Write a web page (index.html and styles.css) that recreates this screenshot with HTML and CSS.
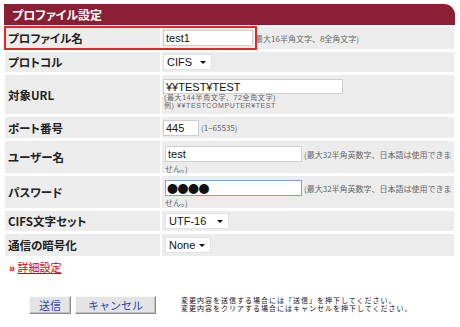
FILE: index.html
```html
<!DOCTYPE html>
<html lang="ja">
<head>
    <meta charset="UTF-8">
    <title>プロファイル設定</title>
    <link rel="stylesheet" href="styles.css">
</head>
<body>

    <div class="panel">
        <div class="title">プロファイル設定</div>

        <table class="form">
            <tr class="r1">
                <th>プロファイル名</th>
                <td>
                    <div class="line">
                        <input class="txt w90" type="text" value="test1">
                        <span class="hint">最大16半角文字、8全角文字)</span>
                    </div>
                </td>
            </tr>
            <tr class="r2">
                <th>プロトコル</th>
                <td>
                    <div class="line">
                        <span class="sel w49"><select><option>CIFS</option></select></span>
                    </div>
                </td>
            </tr>
            <tr class="r3">
                <th>対象URL</th>
                <td>
                    <div class="line">
                        <input class="txt w180 thin" type="text" value="¥¥TEST¥TEST">
                    </div>
                    <div class="small">(最大144半角文字、72全角文字)</div>
                    <div class="small">例) ¥¥TESTCOMPUTER¥TEST</div>
                </td>
            </tr>
            <tr class="r4">
                <th>ポート番号</th>
                <td>
                    <div class="line">
                        <input class="txt w35" type="text" value="445">
                        <span class="hint">(1−65535)</span>
                    </div>
                </td>
            </tr>
            <tr class="r5">
                <th>ユーザー名</th>
                <td>
                    <div class="line">
                        <input class="txt w137" type="text" value="test">
                        <span class="hint">(最大32半角英数字、日本語は使用できま</span>
                    </div>
                    <div class="rest">せん。)</div>
                </td>
            </tr>
            <tr class="r6">
                <th>パスワード</th>
                <td>
                    <div class="line">
                        <input class="txt w137 pw focus" type="text" value="●●●●">
                        <span class="hint">(最大32半角英数字、日本語は使用できま</span>
                    </div>
                    <div class="rest">せん。)</div>
                </td>
            </tr>
            <tr class="r7">
                <th>CIFS文字セット</th>
                <td>
                    <div class="line">
                        <span class="sel w64"><select><option>UTF-16</option></select></span>
                    </div>
                </td>
            </tr>
            <tr class="r8">
                <th>通信の暗号化</th>
                <td>
                    <div class="line">
                        <span class="sel w46"><select><option>None</option></select></span>
                    </div>
                </td>
            </tr>
        </table>

        <div class="mark"></div>

        <div class="more">
            <span class="raquo">»</span> <a href="#">詳細設定</a>
        </div>

        <div class="actions">
            <button class="btn b-send">送信</button>
            <button class="btn b-cancel">キャンセル</button>
            <div class="note">
                <div>変更内容を送信する場合には「送信」を押下してください。</div>
                <div>変更内容をクリアする場合にはキャンセルを押下してください。</div>
            </div>
        </div>
    </div>

</body>
</html>
```

FILE: styles.css
```css
body {
    margin: 0;
    padding: 0;
    background: #ffffff;
    font-family: "Noto Sans CJK JP", "Liberation Sans", sans-serif;
    color: #222;
}

.panel {
    position: relative;
    margin: 4px 0 0 3px;
    width: 453px;
}

.title {
    margin-left: 1px;
    width: 451px;
    height: 21px;
    box-sizing: border-box;
    padding: 3px 0 0 8px;
    background: #8a1f33;
    border-top-right-radius: 11px;
    color: #fff;
    font-size: 12px;
    font-weight: bold;
    line-height: 15px;
    font-feature-settings: "palt";
}

.form {
    width: 453px;
    margin-top: -1px;
    border-collapse: separate;
    border-spacing: 2px 3px;
    table-layout: fixed;
}

.form th,
.form td {
    background: #ececec;
    padding: 0;
    vertical-align: middle;
    box-sizing: border-box;
}

.form th {
    width: 155px;
    padding-left: 3px;
    text-align: left;
    font-size: 11.5px;
    font-weight: bold;
    line-height: 14px;
    color: #222;
    font-feature-settings: "palt";
}

.form td {
    padding-left: 1px;
    font-size: 0;
}

/* row heights follow the reference */
.r1 th, .r1 td { height: 22px; }
.r2 th, .r2 td { height: 20px; }
.r3 th, .r3 td { height: 39px; }
.r4 th, .r4 td { height: 21px; }
.r5 th, .r5 td { height: 31px; }
.r6 th, .r6 td { height: 32px; }
.r7 th, .r7 td { height: 20px; }
.r8 th, .r8 td { height: 22px; }

.r3 td, .r5 td, .r6 td {
    vertical-align: top;
}

.r3 td { padding-top: 4px; }
.r5 td { padding: 5px 0 0 3px; }
.r6 td { padding: 4px 0 0 3px; }
.r7 td, .r8 td { padding-left: 3px; }

.line {
    display: flex;
    align-items: center;
    height: 16px;
    white-space: nowrap;
}

.txt {
    height: 16px;
    box-sizing: border-box;
    margin: 0;
    padding: 0 0 0 2px;
    border: 1px solid #cfcfcf;
    background: #fff;
    font-family: "Liberation Sans", sans-serif;
    font-size: 11px;
    color: #111;
    outline: none;
}

.thin { height: 15px; }

.w35 { width: 36px; }
.w90 { width: 90px; }
.w137 { width: 137px; }
.w180 { width: 180px; }

.pw {
    font-family: "Noto Sans CJK JP", sans-serif;
    font-size: 11px;
    letter-spacing: -0.5px;
    padding-left: 1px;
}

.focus {
    border-color: #7fa4d0;
}

.hint {
    margin-left: 2px;
    font-size: 8px;
    line-height: 9px;
    color: #666;
}

.r3 .line { height: 15px; }

.small {
    margin-left: 1px;
    font-family: "Liberation Sans", "Noto Sans CJK JP", sans-serif;
    font-size: 7px;
    letter-spacing: 0.6px;
    line-height: 8px;
    color: #666;
    white-space: nowrap;
}

.rest {
    margin-top: 2px;
    font-size: 8px;
    line-height: 9px;
    color: #666;
}

.sel {
    position: relative;
    display: inline-block;
    height: 16px;
}

.sel select {
    appearance: none;
    -webkit-appearance: none;
    height: 16px;
    width: 100%;
    margin: 0;
    padding: 0 0 0 3px;
    border: 1px solid #e2e2e2;
    border-radius: 0;
    background: #fff;
    font-family: "Liberation Sans", sans-serif;
    font-size: 11px;
    line-height: 14px;
    color: #111;
}

.sel::after {
    content: "";
    position: absolute;
    right: 6px;
    top: 7px;
    border-left: 3px solid transparent;
    border-right: 3px solid transparent;
    border-top: 3px solid #111;
}

.w46 { width: 46px; }
.w49 { width: 49px; }
.w64 { width: 64px; }

.mark {
    position: absolute;
    left: 1px;
    top: 22px;
    width: 253px;
    height: 24px;
    box-sizing: border-box;
    border: 2px solid #e3282c;
}

.more {
    margin: 2px 0 0 6px;
    height: 12px;
    font-size: 11px;
    line-height: 12px;
    color: #e00000;
}

.raquo {
    font-family: "Liberation Sans", sans-serif;
    font-weight: bold;
}

.more a {
    color: #e00000;
    text-decoration: underline;
}

.actions {
    display: flex;
    align-items: center;
    margin: 23px 0 0 26px;
}

.btn {
    height: 18px;
    margin: 0 4px 0 0;
    padding: 0;
    background: #e4e4e4;
    border: 1px solid;
    border-color: #f8f8f8 #8a8a8a #8a8a8a #f8f8f8;
    box-shadow: inset -1px -1px 0 #c0c0c0;
    font-family: "Noto Sans CJK JP", sans-serif;
    font-size: 11px;
    line-height: 14px;
    color: #2b46b8;
}

.b-send { width: 42px; }
.b-cancel { width: 81px; }

.note {
    margin-left: 21px;
    font-family: "Liberation Sans", "Noto Sans CJK JP", sans-serif;
    font-size: 7px;
    letter-spacing: 1px;
    line-height: 8px;
    color: #111;
    white-space: nowrap;
}

.note div {
    height: 8px;
}
```
